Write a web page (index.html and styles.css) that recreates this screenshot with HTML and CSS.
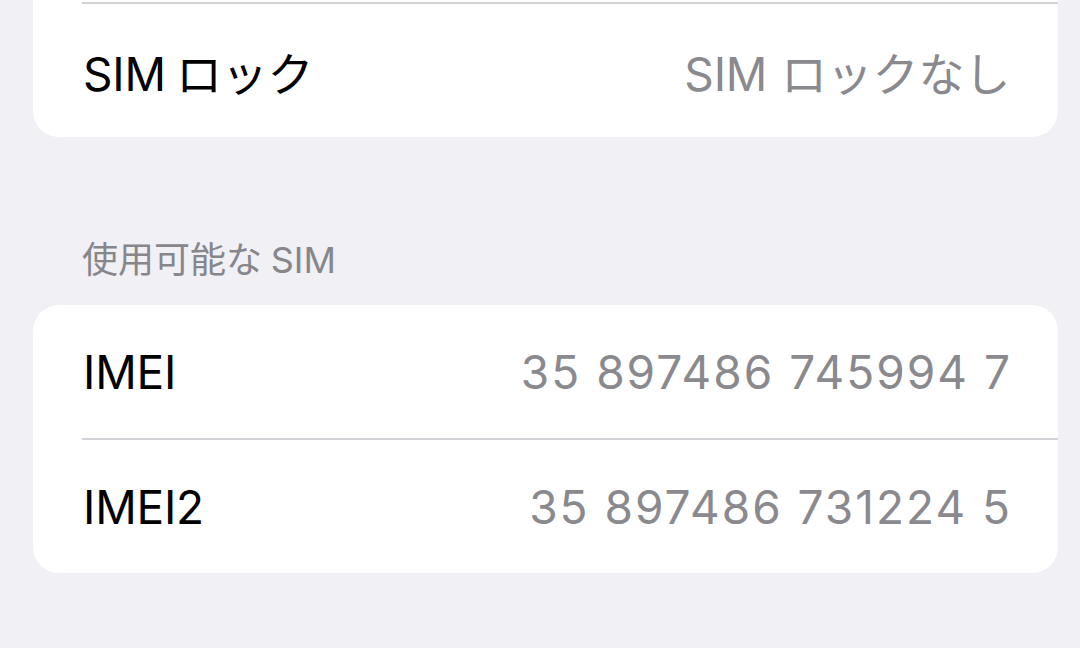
FILE: index.html
```html
<!DOCTYPE html>
<html lang="ja">
<head>
<meta charset="utf-8">
<title>情報</title>
<link rel="stylesheet" href="styles.css">
</head>
<body>
<main class="page">
  <section class="group group-continued">
    <div class="row row-sep">
      <span class="label"><span class="latin">SIM</span>ロック</span>
      <span class="value"><span class="latin">SIM</span>ロックなし</span>
    </div>
  </section>

  <h2 class="section-title">使用可能な<span class="latin-lead">SIM</span></h2>
  <section class="group">
    <div class="row">
      <span class="label">IMEI</span>
      <span class="value number">35 897486 745994 7</span>
    </div>
    <div class="row row-sep">
      <span class="label">IMEI2</span>
      <span class="value number">35 897486 731224 5</span>
    </div>
  </section>
</main>
</body>
</html>
```

FILE: styles.css
```css
html, body {
  margin: 0;
  padding: 0;
  background: #f0f0f5;
}

body {
  width: 1080px;
  height: 648px;
  overflow: hidden;
  font-family: "Inter", "Noto Sans CJK JP", sans-serif;
  -webkit-font-smoothing: antialiased;
}

.page {
  padding: 0 22px 0 33px;
  display: flex;
  flex-direction: column;
}

.group {
  background: #ffffff;
  border-radius: 26px;
  overflow: hidden;
}

/* the group is continued from rows scrolled above the viewport */
.group-continued {
  border-top-left-radius: 0;
  border-top-right-radius: 0;
  padding-top: 2px;
}

.row {
  height: 133px;
  display: flex;
  align-items: center;
  justify-content: space-between;
  padding: 0 48px 0 50px;
  box-sizing: content-box;
  font-size: 46px;
  letter-spacing: -0.2px;
}

.row-sep {
  position: relative;
  border-top: 2px solid transparent;
}

.row-sep::before {
  content: "";
  position: absolute;
  top: -2px;
  left: 49px;
  right: 0;
  height: 2px;
  background: #d2d2d6;
}

.label {
  color: #000000;
}

.value {
  color: #8a8a8e;
}

/* spacing between Latin and Japanese runs */
.latin {
  margin-right: 0.22em;
}

.latin-lead {
  margin-left: 0.24em;
}

.value .latin {
  margin-right: 0.3em;
}

.number {
  letter-spacing: 2px;
  margin-right: -2px;
}

.section-title {
  margin: 102px 0 23px 49px;
  font-size: 36px;
  line-height: 43px;
  font-weight: 400;
  color: #86868b;
}
```
